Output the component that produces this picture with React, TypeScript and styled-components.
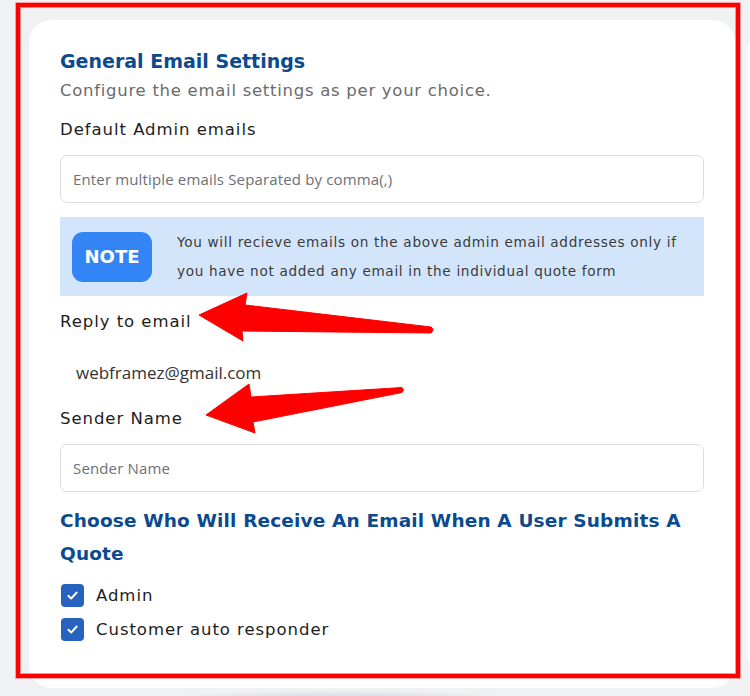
import React from "react";
import styled, { createGlobalStyle } from "styled-components";

const GlobalStyle = createGlobalStyle`
  html, body {
    margin: 0;
    padding: 0;
    background: #f0f1f3;
    overflow: hidden;
  }
  * { box-sizing: border-box; }
`;

const Page = styled.div`
  position: relative;
  width: 750px;
  height: 696px;
  overflow: hidden;
  display: flex;
  align-items: flex-start;
  gap: 12px;
  padding: 20px 0 0 29px;
  background:
    radial-gradient(ellipse 190px 10px at 340px 700px, #c9d3df 0%, rgba(201, 211, 223, 0) 100%),
    #f0f1f3;
`;

const Card = styled.div`
  flex: 0 0 706px;
  background: #ffffff;
  border-radius: 22px;
  padding: 27px 31px 42px 31px;
  display: flex;
  flex-direction: column;
  font-family: "DejaVu Sans", "Noto Sans", sans-serif;
`;

const SideCard = styled.div`
  flex: 0 0 40px;
  height: 640px;
  margin-top: 13px;
  background: #fbfbfc;
  border-radius: 18px;
`;

const Title = styled.h2`
  margin: 0;
  font-size: 19px;
  line-height: 28px;
  font-weight: 700;
  color: #0c4a8f;
`;

const Subtitle = styled.p`
  margin: 2px 0 0;
  font-size: 16.5px;
  line-height: 28px;
  font-weight: 400;
  letter-spacing: 0.72px;
  color: #6b6b6b;
`;

const Label = styled.div<{ $mt: number }>`
  margin-top: ${(p) => p.$mt}px;
  font-size: 16.5px;
  line-height: 26px;
  font-weight: 400;
  letter-spacing: 0.95px;
  color: #1c1c1c;
`;

const Input = styled.input<{ $mt: number }>`
  margin-top: ${(p) => p.$mt}px;
  height: 48px;
  width: 100%;
  border: 1px solid #dcdcdc;
  border-radius: 7px;
  padding: 0 12px;
  font-family: "Open Sans", "Noto Sans", sans-serif;
  font-size: 15px;
  letter-spacing: 0.15px;
  color: #333;
  background: #fff;
  outline: none;
  &::placeholder {
    color: #6c7077;
  }
`;

const Value = styled.div`
  margin-top: 13px;
  height: 48px;
  display: flex;
  align-items: center;
  padding-left: 16px;
  font-family: "Open Sans", "Noto Sans", sans-serif;
  font-size: 17px;
  color: #333;
`;

const Note = styled.div`
  margin-top: 14px;
  height: 79px;
  background: #d3e5fb;
  display: flex;
  align-items: center;
  gap: 25px;
  padding: 0 12px;
`;

const Badge = styled.div`
  flex: 0 0 80px;
  height: 50px;
  border-radius: 11px;
  background: #3385f6;
  color: #ffffff;
  display: flex;
  align-items: center;
  justify-content: center;
  font-size: 18px;
  font-weight: 700;
`;

const NoteText = styled.p`
  margin: 0;
  font-size: 13.6px;
  line-height: 28.5px;
  letter-spacing: 0.68px;
  color: #3a3a3a;
`;

const Heading = styled.h3`
  margin: 12px 0 0;
  font-size: 18.5px;
  line-height: 33px;
  font-weight: 700;
  letter-spacing: 0.15px;
  color: #0c4a8f;
`;

const Options = styled.div`
  margin-top: 8px;
  display: flex;
  flex-direction: column;
`;

const Option = styled.label`
  height: 34px;
  display: flex;
  align-items: center;
  gap: 12px;
  padding-left: 1px;
  font-size: 16.5px;
  letter-spacing: 0.95px;
  color: #1c1c1c;
`;

const Box = styled.span`
  width: 23px;
  height: 23px;
  border-radius: 4px;
  background: #2762bf;
  display: flex;
  align-items: center;
  justify-content: center;
`;

const Overlay = styled.svg`
  position: absolute;
  left: 0;
  top: 0;
  pointer-events: none;
`;

const Frame = styled.div`
  position: absolute;
  left: 16px;
  top: 3px;
  width: 724px;
  height: 675px;
  border: 4px solid #ff0000;
  box-shadow: inset 0 0 0 1px rgba(255, 80, 80, 0.6), 0 0 0 1px rgba(255, 80, 80, 0.5);
  pointer-events: none;
`;

const Check = () => (
  <svg width="15" height="15" viewBox="0 0 16 16" fill="none">
    <polyline points="3.5,8.3 6.6,11.2 12.5,4.8" stroke="#fff" strokeWidth="2" strokeLinecap="round" strokeLinejoin="round" />
  </svg>
);

export default function App() {
  return (
    <>
      <GlobalStyle />
      <Page>
        <Card>
          <Title>General Email Settings</Title>
          <Subtitle>Configure the email settings as per your choice.</Subtitle>
          <Label $mt={12}>Default Admin emails</Label>
          <Input $mt={12} placeholder="Enter multiple emails Separated by comma(,)" />
          <Note>
            <Badge>NOTE</Badge>
            <NoteText>
              You will recieve emails on the above admin email addresses only if you have not added any email in the
              individual quote form
            </NoteText>
          </Note>
          <Label $mt={13}>Reply to email</Label>
          <Value>webframez@gmail.com</Value>
          <Label $mt={10}>Sender Name</Label>
          <Input $mt={12} placeholder="Sender Name" />
          <Heading>Choose Who Will Receive An Email When A User Submits A Quote</Heading>
          <Options>
            <Option>
              <Box>
                <Check />
              </Box>
              Admin
            </Option>
            <Option>
              <Box>
                <Check />
              </Box>
              Customer auto responder
            </Option>
          </Options>
        </Card>
        <SideCard />
        <Frame />
        <Overlay width="750" height="696" viewBox="0 0 750 696">
          <path
            d="M199,315 L247,293 L245,305 L431,327 Q435,330 431,333 L242,331 L243,341 Z"
            fill="#ff0000"
            stroke="#ff0000"
            strokeWidth="1"
            strokeLinejoin="round"
          />
          <path
            d="M206,415 L249,384 L251,397 L402,387.5 Q405,390 402,392.5 L253,422 L255,433 Z"
            fill="#ff0000"
            stroke="#ff0000"
            strokeWidth="1"
            strokeLinejoin="round"
          />
        </Overlay>
      </Page>
    </>
  );
}
